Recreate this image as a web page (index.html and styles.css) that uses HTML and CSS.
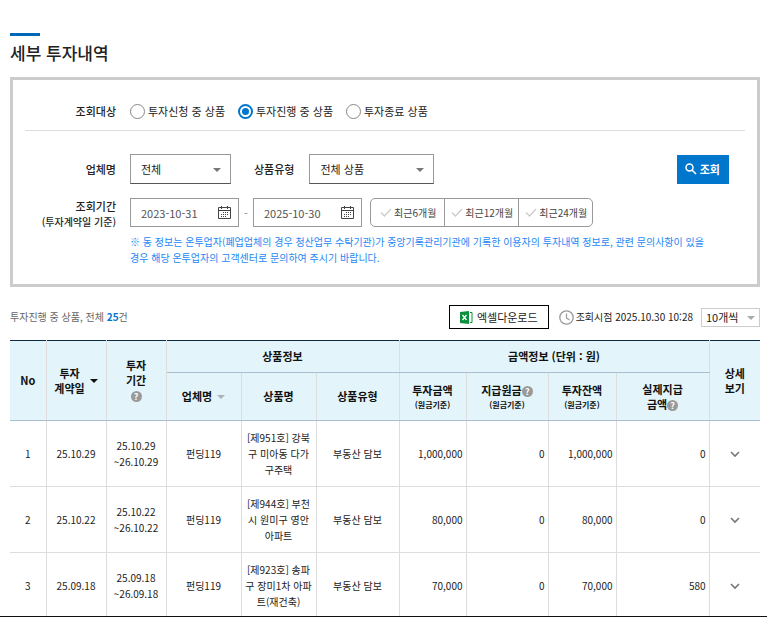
FILE: index.html
```html
<!DOCTYPE html>
<html lang="ko">
<head>
  <meta charset="UTF-8" />
  <meta name="viewport" content="width=device-width, initial-scale=1.0" />
  <title>세부 투자내역</title>
  <link rel="stylesheet" href="styles.css">
</head>
<body>
  <svg class="sprite" aria-hidden="true">
    <symbol id="icon-calendar" viewBox="0 0 13 13">
      <path d="M.5 1.500h12v11H.5zM.5 4.500h12M3.500 0v3M9.500 0v3" fill="none" stroke="#444" />
      <path d="M5 6h1v1H5zM7 6h1v1H7zM9 6h1v1H9zM3 8h1v1H3zM5 8h1v1H5zM7 8h1v1H7zM9 8h1v1H9zM3 10h1v1H3zM5 10h1v1H5zM7 10h1v1H7z" fill="#444" />
    </symbol>
    <symbol id="icon-check" viewBox="0 0 12 9">
      <path d="M1 4.500l3.500 3.500L11 1" fill="none" stroke="#ccc" stroke-width="1.300" />
    </symbol>
    <symbol id="icon-chevron" viewBox="0 0 10 7">
      <path d="M1 1l4 4 4-4" fill="none" stroke="#777" stroke-width="1.600" />
    </symbol>
  </svg>

  <div class="page">
    <h1 class="title">세부 투자내역</h1>

    <!-- 검색 조건 -->
    <form class="search-box">
      <div class="row target-row">
        <span class="row-label" id="target-label">조회대상</span>
        <div class="radios" role="radiogroup" aria-labelledby="target-label">
          <label class="radio"><input type="radio" name="target" /><span>투자신청 중 상품</span></label>
          <label class="radio"><input type="radio" name="target" checked /><span>투자진행 중 상품</span></label>
          <label class="radio"><input type="radio" name="target" /><span>투자종료 상품</span></label>
        </div>
      </div>

      <div class="row filter-row">
        <label class="row-label" for="company">업체명</label>
        <div class="filters">
          <span class="select company-select">
            <select id="company"><option>전체</option></select>
          </span>
          <label class="inner-label" for="product-type">상품유형</label>
          <span class="select type-select">
            <select id="product-type"><option>전체 상품</option></select>
          </span>
          <button type="submit" class="search-button">
            <svg width="12" height="12" viewBox="0 0 12 12"><circle cx="4.500" cy="4.500" r="3.500" fill="none" stroke="#fff" stroke-width="1.500" /><path d="M7 7l4 4" stroke="#fff" stroke-width="1.600" /></svg>
            조회
          </button>
        </div>
      </div>

      <div class="row period-row">
        <label class="row-label" for="date-from">조회기간<small>(투자계약일 기준)</small></label>
        <div>
          <div class="period">
            <span class="date">
              <input type="text" id="date-from" value="2023-10-31" />
              <button type="button" class="plain" aria-label="시작일 선택"><svg width="13" height="13"><use href="#icon-calendar" /></svg></button>
            </span>
            <span class="dash">-</span>
            <span class="date">
              <input type="text" id="date-to" value="2025-10-30" aria-label="종료일" />
              <button type="button" class="plain" aria-label="종료일 선택"><svg width="13" height="13"><use href="#icon-calendar" /></svg></button>
            </span>
            <div class="quick">
              <button type="button"><svg width="12" height="9"><use href="#icon-check" /></svg>최근6개월</button>
              <button type="button"><svg width="12" height="9"><use href="#icon-check" /></svg>최근12개월</button>
              <button type="button"><svg width="12" height="9"><use href="#icon-check" /></svg>최근24개월</button>
            </div>
          </div>
          <p class="notice">※ 동 정보는 온투업자(폐업업체의 경우 청산업무 수탁기관)가 중앙기록관리기관에 기록한 이용자의 투자내역 정보로, 관련 문의사항이 있을 경우 해당 온투업자의 고객센터로 문의하여 주시기 바랍니다.</p>
        </div>
      </div>
    </form>

    <!-- 목록 상단 -->
    <div class="toolbar">
      <p class="total">투자진행 중 상품, 전체 <b>25</b>건</p>
      <button type="button" class="excel-button">
        <svg width="13" height="13" viewBox="0 0 13 13"><path d="M0 1l9-1v13l-9-1z" fill="#0a8f3c" /><path d="M10 1.500h2v10h-2" fill="none" stroke="#0a8f3c" /><path d="M2.500 4l4 5M6.500 4l-4 5" stroke="#fff" stroke-width="1.300" /></svg>
        엑셀다운로드
      </button>
      <p class="asof">
        <svg width="15" height="15" viewBox="0 0 15 15"><circle cx="7.500" cy="7.500" r="6.700" fill="none" stroke="#999" stroke-width="1.300" /><path d="M7.500 3.500v4.500l3 2" fill="none" stroke="#999" stroke-width="1.200" /></svg>
        조회시점 2025.10.30 10:28
      </p>
      <span class="select count-select">
        <select aria-label="목록 개수"><option>10개씩</option></select>
      </span>
    </div>

    <table class="list">
      <colgroup>
        <col class="c-no" /><col class="c-date" /><col class="c-date" />
        <col class="c-name" /><col class="c-name" /><col class="c-type" />
        <col class="c-amount" /><col class="c-paid" /><col class="c-balance" />
        <col class="c-real" /><col class="c-more" />
      </colgroup>
      <thead>
        <tr>
          <th rowspan="2">No</th>
          <th rowspan="2"><button type="button" class="sort active"><span>투자<br>계약일</span></button></th>
          <th rowspan="2">투자<br>기간<br><span class="help">?</span></th>
          <th colspan="3" class="group">상품정보</th>
          <th colspan="4" class="group">금액정보 (단위 : 원)</th>
          <th rowspan="2" class="last">상세<br>보기</th>
        </tr>
        <tr>
          <th><button type="button" class="sort"><span>업체명</span></button></th>
          <th>상품명</th>
          <th>상품유형</th>
          <th>투자금액<small>(원금기준)</small></th>
          <th>지급원금<span class="help">?</span><small>(원금기준)</small></th>
          <th>투자잔액<small>(원금기준)</small></th>
          <th>실제지급<br>금액<span class="help">?</span></th>
        </tr>
      </thead>
      <tbody>
        <tr>
          <td>1</td>
          <td>25.10.29</td>
          <td>25.10.29<br>~26.10.29</td>
          <td>펀딩119</td>
          <td>[제951호] 강북구 미아동 다가구주택</td>
          <td>부동산 담보</td>
          <td class="num">1,000,000</td>
          <td class="num">0</td>
          <td class="num">1,000,000</td>
          <td class="num">0</td>
          <td class="last"><button type="button" class="plain" aria-label="상세보기"><svg width="10" height="7"><use href="#icon-chevron" /></svg></button></td>
        </tr>
        <tr>
          <td>2</td>
          <td>25.10.22</td>
          <td>25.10.22<br>~26.10.22</td>
          <td>펀딩119</td>
          <td>[제944호] 부천시 원미구 영안아파트</td>
          <td>부동산 담보</td>
          <td class="num">80,000</td>
          <td class="num">0</td>
          <td class="num">80,000</td>
          <td class="num">0</td>
          <td class="last"><button type="button" class="plain" aria-label="상세보기"><svg width="10" height="7"><use href="#icon-chevron" /></svg></button></td>
        </tr>
        <tr>
          <td>3</td>
          <td>25.09.18</td>
          <td>25.09.18<br>~26.09.18</td>
          <td>펀딩119</td>
          <td>[제923호] 송파구 장미1차 아파트(재건축)</td>
          <td>부동산 담보</td>
          <td class="num">70,000</td>
          <td class="num">0</td>
          <td class="num">70,000</td>
          <td class="num">580</td>
          <td class="last"><button type="button" class="plain" aria-label="상세보기"><svg width="10" height="7"><use href="#icon-chevron" /></svg></button></td>
        </tr>
      </tbody>
    </table>
  </div>
</body>
</html>
```

FILE: styles.css
```css
* {
  box-sizing: border-box;
}
body {
  margin: 0;
  background: #fff;
  color: #222;
  font-family: "Noto Sans CJK KR", "Noto Sans", sans-serif;
  font-size: 11px;
  line-height: 16px;
}
button, input, select {
  font: inherit;
  color: inherit;
}
button {
  cursor: pointer;
}
p {
  margin: 0;
}
svg {
  display: block;
  flex: none;
}
.sprite {
  position: absolute;
  width: 0;
  height: 0;
}
.page {
  height: 100vh;
  overflow: hidden;
  padding: 33px 7px 0 10px;
  border-bottom: 1px solid #111;
}
.title {
  margin: 0 0 10px;
  font-size: 17px;
  font-weight: 500;
  line-height: 29px;
}
.title::before {
  content: "";
  display: block;
  width: 30px;
  height: 3px;
  margin-bottom: 2px;
  background: #0068b7;
}

/* search box */
.search-box {
  border: 3px solid #ccc;
  padding: 0 12px 18px;
}
.row {
  display: grid;
  grid-template-columns: 91px 1fr;
  column-gap: 14px;
}
.row-label, .inner-label {
  font-weight: 500;
  text-align: right;
}
.row-label small {
  display: block;
  font-size: 10px;
}
.target-row {
  align-items: center;
  padding: 23px 0 11px;
  border-bottom: 1px solid #ddd;
}
.radios {
  display: flex;
  gap: 13px;
}
.radio {
  display: flex;
  align-items: center;
  gap: 3px;
}
.radio input {
  appearance: none;
  width: 15px;
  height: 15px;
  margin: 0;
  border: 1px solid #888;
  border-radius: 50%;
}
.radio input:checked {
  border: 2px solid #0077cc;
  padding: 2px;
  background: #0077cc content-box;
}
.filter-row {
  align-items: center;
  padding: 23px 0 14px;
}
.filters {
  display: flex;
  align-items: center;
}
.inner-label {
  margin: 0 15px 0 23px;
}
.select {
  position: relative;
  display: block;
}
.select::after {
  content: "";
  position: absolute;
  top: 50%;
  right: 10px;
  margin-top: -1px;
  border: 4px solid transparent;
  border-top-color: #777;
  border-bottom: 0;
  pointer-events: none;
}
.select select {
  appearance: none;
  display: block;
  width: 100%;
  height: 30px;
  padding: 0 20px 0 10px;
  border: 1px solid #999;
  border-bottom-color: #555;
  border-radius: 0;
  background: #fff;
}
.company-select {
  width: 101px;
}
.type-select {
  width: 125px;
}
.search-button {
  display: flex;
  align-items: center;
  gap: 3px;
  height: 29px;
  margin: 0 16px 0 auto;
  padding: 0 9px 0 8px;
  border: 0;
  background: #0077cc;
  color: #fff;
  font-weight: 700;
}
.period {
  display: flex;
  align-items: center;
}
.date {
  display: flex;
  align-items: center;
  width: 109px;
  height: 29px;
  padding: 0 7px 0 10px;
  border: 1px solid #999;
  color: #555;
}
.date input {
  flex: 1;
  width: 0;
  padding: 0;
  border: 0;
  outline: 0;
}
.plain {
  display: inline-block;
  padding: 0;
  border: 0;
  background: none;
}
.dash {
  width: 14px;
  text-align: center;
  color: #888;
}
.quick {
  display: flex;
  margin-left: 8px;
  border: 1px solid #999;
  border-radius: 5px;
}
.quick button {
  display: flex;
  align-items: center;
  gap: 2px;
  height: 27px;
  padding: 0 8px 0 9px;
  border: 0;
  background: none;
  color: #444;
  font-size: 10px;
}
.quick button + button {
  padding: 0 5px 0 6px;
  border-left: 1px solid #999;
}
.notice {
  max-width: 580px;
  margin-top: 7px;
  color: #1e88f5;
  font-size: 10px;
}

/* toolbar above the list */
.toolbar {
  display: flex;
  align-items: center;
  height: 24px;
  margin: 18px 0 11px;
  font-size: 10px;
}
.total {
  margin-right: auto;
  color: #666;
}
.total b {
  color: #0077cc;
}
.excel-button {
  display: flex;
  align-items: center;
  gap: 4px;
  height: 24px;
  padding: 0 10px;
  border: 1px solid #000;
  background: #fff;
  font-size: 11px;
}
.asof {
  display: flex;
  align-items: center;
  gap: 2px;
  margin: 0 8px 0 10px;
}
.count-select {
  width: 59px;
  font-size: 11px;
}
.count-select select {
  height: 19px;
  padding: 0 14px 0 4px;
  border-color: #ccc;
}
.count-select::after {
  right: 5px;
  border-top-color: #aaa;
}

/* list */
.list {
  width: 100%;
  table-layout: fixed;
  border-collapse: collapse;
  border-top: 1px solid #0b2b45;
  text-align: center;
}
.c-no { width: 36px; }
.c-date { width: 60px; }
.c-name { width: 75px; }
.c-type { width: 83px; }
.c-amount { width: 67px; }
.c-paid { width: 82px; }
.c-balance { width: 68px; }
.c-real { width: 93px; }
.list th {
  height: 48px;
  padding: 0;
  border-right: 1px solid #ddd;
  border-bottom: 1px solid #a9bfcd;
  background: #e3f5fa;
  color: #111;
  font-weight: 700;
  line-height: 15px;
}
.list .group {
  height: 32px;
}
.list th small {
  display: block;
  font-size: 8px;
  line-height: 13px;
}
.help {
  display: inline-block;
  width: 11px;
  height: 11px;
  border-radius: 50%;
  background: #999;
  color: #fff;
  font-size: 9px;
  line-height: 11px;
  text-align: center;
}
.sort {
  display: inline-flex;
  align-items: center;
  gap: 5px;
  padding: 0;
  border: 0;
  background: none;
  font-weight: 700;
  line-height: 15px;
}
.sort::after {
  content: "";
  border: 4px solid transparent;
  border-top-color: #aab4b8;
  border-bottom: 0;
}
.sort.active::after {
  border-top-color: #111;
}
.list td {
  height: 66px;
  padding: 0 3px;
  border-right: 1px solid #ddd;
  border-bottom: 1px solid #ddd;
  font-size: 10px;
  word-break: break-all;
}
.list .num {
  text-align: right;
}
.list .last {
  border-right: 0;
}
```
